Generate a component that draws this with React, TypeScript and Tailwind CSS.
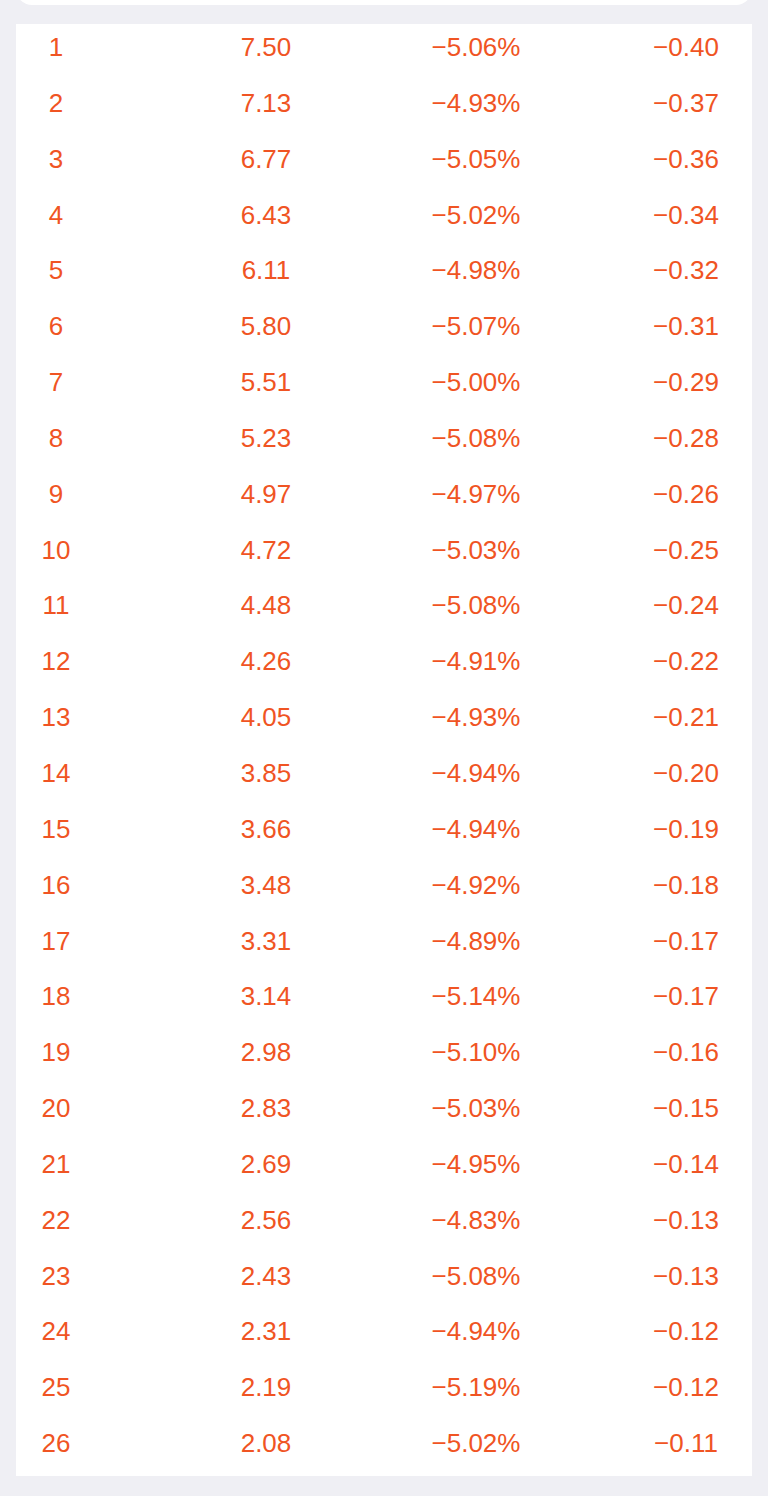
const rows: [string, string, string, string][] = [
  ["1", "7.50", "−5.06%", "−0.40"],
  ["2", "7.13", "−4.93%", "−0.37"],
  ["3", "6.77", "−5.05%", "−0.36"],
  ["4", "6.43", "−5.02%", "−0.34"],
  ["5", "6.11", "−4.98%", "−0.32"],
  ["6", "5.80", "−5.07%", "−0.31"],
  ["7", "5.51", "−5.00%", "−0.29"],
  ["8", "5.23", "−5.08%", "−0.28"],
  ["9", "4.97", "−4.97%", "−0.26"],
  ["10", "4.72", "−5.03%", "−0.25"],
  ["11", "4.48", "−5.08%", "−0.24"],
  ["12", "4.26", "−4.91%", "−0.22"],
  ["13", "4.05", "−4.93%", "−0.21"],
  ["14", "3.85", "−4.94%", "−0.20"],
  ["15", "3.66", "−4.94%", "−0.19"],
  ["16", "3.48", "−4.92%", "−0.18"],
  ["17", "3.31", "−4.89%", "−0.17"],
  ["18", "3.14", "−5.14%", "−0.17"],
  ["19", "2.98", "−5.10%", "−0.16"],
  ["20", "2.83", "−5.03%", "−0.15"],
  ["21", "2.69", "−4.95%", "−0.14"],
  ["22", "2.56", "−4.83%", "−0.13"],
  ["23", "2.43", "−5.08%", "−0.13"],
  ["24", "2.31", "−4.94%", "−0.12"],
  ["25", "2.19", "−5.19%", "−0.12"],
  ["26", "2.08", "−5.02%", "−0.11"],
];

export default function App() {
  return (
    <div className="min-h-[1496px] bg-[#efeff4] px-4 pb-5 overflow-hidden font-['Liberation_Sans',Arial,sans-serif]">
      {/* summary card, scrolled mostly out of view */}
      <div className="h-[32px] -mt-[27px] bg-white rounded-b-[16px]" />

      <div className="mt-[19px] bg-white">
        {rows.map((r) => (
          <div
            key={r[0]}
            className="grid grid-cols-[repeat(4,80px)] gap-x-[130px] h-[55.85px] text-[26px] leading-[47px] text-[#f05423]"
          >
            {r.map((v, i) => (
              <span key={i} className="flex justify-center whitespace-nowrap">
                {v}
              </span>
            ))}
          </div>
        ))}
      </div>
    </div>
  );
}
